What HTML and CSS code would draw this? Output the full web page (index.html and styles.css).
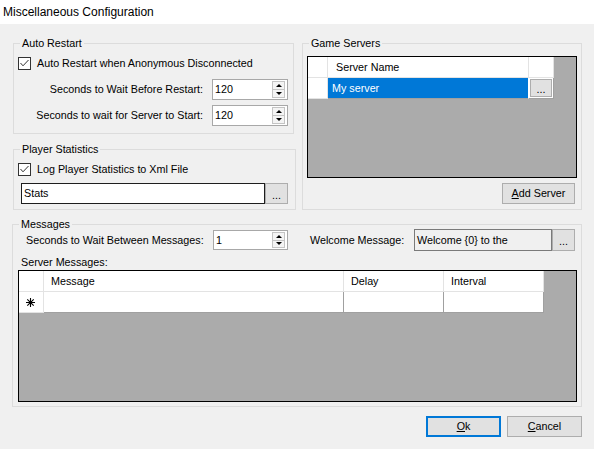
FILE: index.html
```html
<!DOCTYPE html>
<html>
<head>
<meta charset="utf-8">
<link rel="stylesheet" href="styles.css">
</head>
<body>
<div class="titlebar">Miscellaneous Configuration</div>
<div class="client">
  <div class="top">
    <div class="leftcol">
      <fieldset class="group g-auto">
        <legend>Auto Restart</legend>
        <div class="check">
          <svg class="cb" width="13" height="13" viewBox="0 0 13 13"><rect x="0.5" y="0.5" width="12" height="12" fill="#fff" stroke="#333"/><path d="M2.5 6 L5 8.8 L10.5 3" fill="none" stroke="#333" stroke-width="1"/></svg>
          <span class="check-text">Auto Restart when Anonymous Disconnected</span>
        </div>
        <div class="nrow first">
          <span class="nlabel">Seconds to Wait Before Restart:</span>
          <div class="num"><span class="num-val">120</span><span class="spin"><span class="spin-btn"><span class="tri-up"></span></span><span class="spin-btn"><span class="tri-down"></span></span></span></div>
        </div>
        <div class="nrow">
          <span class="nlabel">Seconds to wait for Server to Start:</span>
          <div class="num"><span class="num-val">120</span><span class="spin"><span class="spin-btn"><span class="tri-up"></span></span><span class="spin-btn"><span class="tri-down"></span></span></span></div>
        </div>
      </fieldset>
      <fieldset class="group g-stats">
        <legend>Player Statistics</legend>
        <div class="check">
          <svg class="cb" width="13" height="13" viewBox="0 0 13 13"><rect x="0.5" y="0.5" width="12" height="12" fill="#fff" stroke="#333"/><path d="M2.5 6 L5 8.8 L10.5 3" fill="none" stroke="#333" stroke-width="1"/></svg>
          <span class="check-text">Log Player Statistics to Xml File</span>
        </div>
        <div class="path-row">
          <div class="textbox tb-stats">Stats</div>
          <div class="btn btn-dots">...</div>
        </div>
      </fieldset>
    </div>
    <fieldset class="group g-servers">
      <legend>Game Servers</legend>
      <div class="dgv dgv-servers">
        <div class="dgv-grid servers-cols">
          <div class="cell hdr"></div>
          <div class="cell hdr txt">Server Name</div>
          <div class="cell hdr"></div>
          <div class="cell rowhdr"></div>
          <div class="cell selected">My server</div>
          <div class="cell btncell"><div class="cellbtn">...</div></div>
        </div>
      </div>
      <div class="add-row"><div class="btn btn-add"><u>A</u>dd Server</div></div>
    </fieldset>
  </div>
  <fieldset class="group g-messages">
    <legend>Messages</legend>
    <div class="msg-row">
      <span class="msg-label">Seconds to Wait Between Messages:</span>
      <div class="num num-msg"><span class="num-val">1</span><span class="spin"><span class="spin-btn"><span class="tri-up"></span></span><span class="spin-btn"><span class="tri-down"></span></span></span></div>
      <span class="welcome-label">Welcome Message:</span>
      <div class="textbox tb-welcome">Welcome {0} to the</div>
      <div class="btn btn-dots btn-welcome">...</div>
    </div>
    <div class="server-msg-label">Server Messages:</div>
    <div class="dgv dgv-msgs">
      <div class="dgv-grid msgs-cols">
        <div class="cell hdr"></div>
        <div class="cell hdr txt">Message</div>
        <div class="cell hdr txt">Delay</div>
        <div class="cell hdr txt">Interval</div>
        <div class="cell rowhdr star"><svg width="9" height="9" viewBox="0 0 9 9"><path d="M4.5 0V9M0 4.5H9M1.3 1.3L7.7 7.7M7.7 1.3L1.3 7.7" stroke="#000" stroke-width="1.1"/></svg></div>
        <div class="cell data"></div>
        <div class="cell data"></div>
        <div class="cell data"></div>
      </div>
    </div>
  </fieldset>
  <div class="buttons">
    <div class="btn btn-ok"><u>O</u>k</div>
    <div class="btn btn-cancel"><u>C</u>ancel</div>
  </div>
</div>
</body>
</html>
```
FILE: styles.css
```css
* { box-sizing: border-box; }
html, body { margin: 0; padding: 0; }
body {
  width: 594px;
  height: 449px;
  background: #f0f0f0;
  font-family: "Liberation Sans", Arial, sans-serif;
  font-size: 10.75px;
  line-height: 13px;
  color: #000;
  overflow: hidden;
}
.titlebar {
  height: 24px;
  background: #fff;
  font-size: 12px;
  line-height: 24px;
  padding-left: 3px;
}
.client { padding: 13px 12px 0 12px; }
.top { display: flex; align-items: flex-start; }
.leftcol { margin-left: 1px; width: 283px; }

.group {
  margin: 0;
  padding: 0;
  min-width: 0;
  border: 1px solid #dcdcdc;
}
.group > legend {
  padding: 0 2px;
  margin-left: 6px;
  font-size: 10.75px;
  line-height: 13px;
}
.g-auto { width: 281px; height: 97px; }
.g-stats { width: 283px; height: 67px; margin-top: 9px; }
.g-servers { width: 280px; height: 173px; margin-left: 6px; }
.g-messages { width: 570px; height: 189px; margin-top: 8px; }

.check {
  display: flex;
  align-items: center;
  height: 13px;
  margin: 7px 0 0 4px;
}
.cb { display: block; flex: none; }
.check-text { margin-left: 6px; white-space: nowrap; }

.nrow {
  display: flex;
  justify-content: flex-end;
  align-items: center;
  height: 21px;
  margin: 5px 5px 0 0;
}
.nrow.first { margin-top: 9px; }
.nlabel { margin-right: 9px; white-space: nowrap; }

.num {
  display: flex;
  align-items: stretch;
  width: 76px;
  height: 21px;
  background: #fff;
  border: 1px solid #a8a8a8;
}
.num-val {
  flex: 1;
  padding-left: 2px;
  display: flex;
  align-items: center;
}
.spin {
  display: flex;
  flex-direction: column;
  width: 13px;
  margin: 1px 2px 1px 0;
}
.spin-btn {
  flex: 1;
  display: flex;
  align-items: center;
  justify-content: center;
  background: #f4f4f4;
  border: 1px solid #c4c4c4;
}
.spin-btn + .spin-btn { border-top: none; }
.tri-up {
  width: 0; height: 0;
  border-left: 3px solid transparent;
  border-right: 3px solid transparent;
  border-bottom: 3px solid #000;
}
.tri-down {
  width: 0; height: 0;
  border-left: 3px solid transparent;
  border-right: 3px solid transparent;
  border-top: 3px solid #000;
}

.path-row { display: flex; margin: 7px 0 0 7px; height: 21px; }
.textbox {
  display: flex;
  align-items: center;
  padding-left: 2px;
  background: #fff;
  white-space: nowrap;
  overflow: hidden;
}
.tb-stats { width: 244px; border: 1px solid #1e1e1e; }

.btn {
  display: flex;
  align-items: center;
  justify-content: center;
  background: #e1e1e1;
  border: 1px solid #adadad;
  white-space: nowrap;
}
.btn-dots { width: 23px; padding-top: 3px; }

.dgv {
  background: #ababab;
  border: 1px solid #000;
}
.dgv-grid { display: grid; grid-auto-rows: 21px; }
.dgv-servers { width: 270px; height: 122px; margin: 6px 0 0 4px; }
.servers-cols { grid-template-columns: 20px 201px 25px; }
.dgv-msgs { width: 559px; height: 132px; margin: 1px 0 0 5px; }
.msgs-cols { grid-template-columns: 25px 300px 100px 100px; }

.cell {
  background: #fff;
  border-right: 1px solid #a0a0a0;
  border-bottom: 1px solid #a0a0a0;
  display: flex;
  align-items: center;
  white-space: nowrap;
}
.cell.hdr { border-color: #e3e3e3; }
.cell.hdr.txt { padding-left: 7px; }
.servers-cols .cell.hdr.txt { padding-left: 8px; }
.cell.rowhdr { border-color: #e3e3e3; }
.cell.star { padding-left: 7px; }
.cell.selected {
  background: #0078d7;
  color: #fff;
  padding-left: 4px;
  border-right-color: #fff;
}
.cell.btncell { padding: 1px; }
.cellbtn {
  width: 100%;
  height: 100%;
  background: #e1e1e1;
  border: 1px solid #adadad;
  display: flex;
  align-items: center;
  justify-content: center;
  padding-top: 3px;
}

.add-row { display: flex; justify-content: flex-end; margin: 5px 6px 0 0; }
.btn-add { width: 73px; height: 21px; }

.msg-row {
  display: flex;
  align-items: center;
  height: 22px;
  margin-top: -2px;
}
.msg-label { margin-left: 13px; width: 187px; white-space: nowrap; }
.num-msg { width: 75px; height: 20px; }
.welcome-label { margin-left: 22px; width: 104px; white-space: nowrap; }
.tb-welcome {
  width: 138px;
  height: 22px;
  background: #f0f0f0;
  border: 1px solid #7a7a7a;
}
.btn-welcome { height: 22px; }

.server-msg-label { margin: 5px 0 0 8px; }

.buttons {
  display: flex;
  justify-content: flex-end;
  gap: 6px;
  margin-top: 9px;
}
.btn-ok { width: 75px; height: 21px; border: 2px solid #0078d7; }
.btn-cancel { width: 75px; height: 21px; }
```
